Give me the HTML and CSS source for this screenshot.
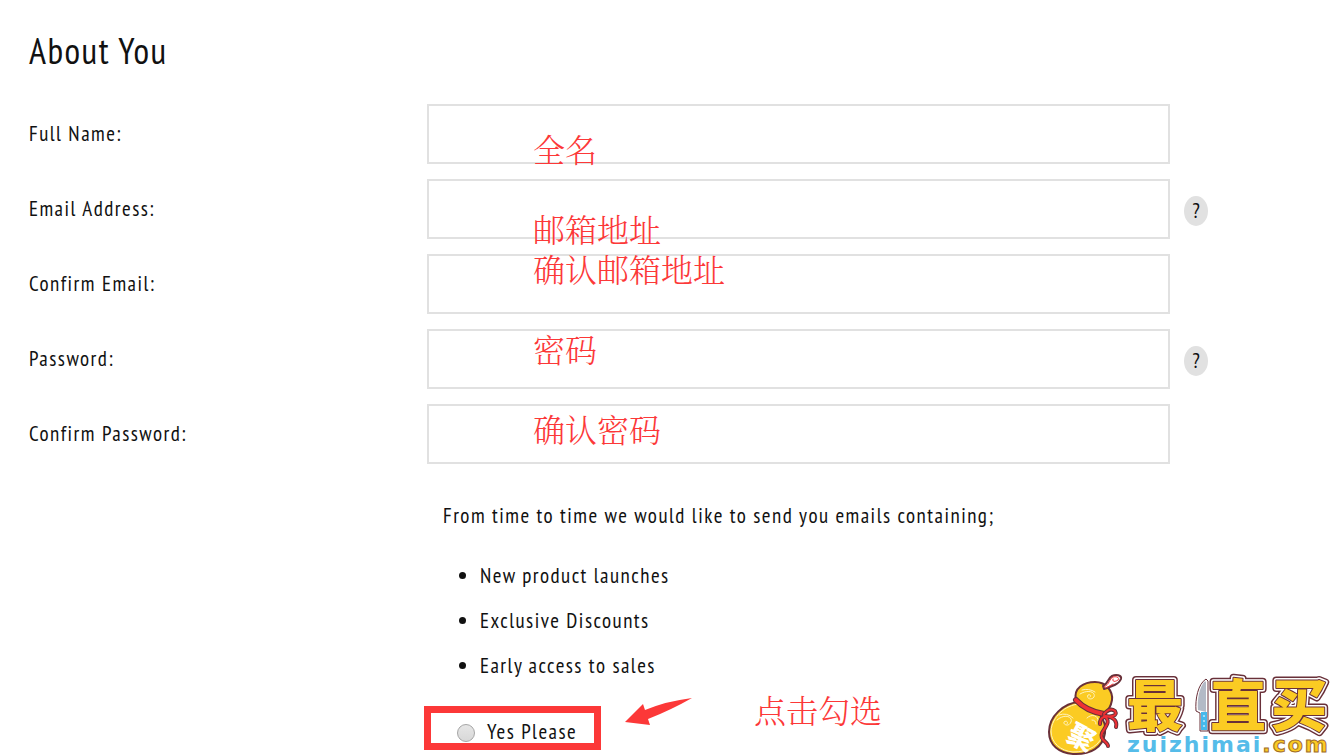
FILE: index.html
```html
<!DOCTYPE html>
<html lang="en">
<head>
<meta charset="utf-8">
<title>About You</title>
<link rel="stylesheet" href="styles.css">
</head>
<body>
<main class="page">
  <h1 class="title">About You</h1>
  <form class="form">
    <div class="row">
      <label class="label" for="name">Full Name:</label>
      <div class="field"><input class="input" id="name" type="text"><span class="note note-low">全名</span></div>
    </div>
    <div class="row">
      <label class="label" for="email">Email Address:</label>
      <div class="field"><input class="input" id="email" type="email"><span class="note note-lowest">邮箱地址</span></div>
      <button class="help" type="button" aria-label="Email help">?</button>
    </div>
    <div class="row">
      <label class="label" for="email2">Confirm Email:</label>
      <div class="field"><input class="input" id="email2" type="email"><span class="note note-highest">确认邮箱地址</span></div>
    </div>
    <div class="row">
      <label class="label" for="pass">Password:</label>
      <div class="field"><input class="input" id="pass" type="password"><span class="note note-high">密码</span></div>
      <button class="help" type="button" aria-label="Password help">?</button>
    </div>
    <div class="row">
      <label class="label" for="pass2">Confirm Password:</label>
      <div class="field"><input class="input" id="pass2" type="password"><span class="note note-middle">确认密码</span></div>
    </div>
    <div class="row">
      <div class="consent">
        <p class="intro">From time to time we would like to send you emails containing;</p>
        <ul class="list">
          <li>New product launches</li>
          <li>Exclusive Discounts</li>
          <li>Early access to sales</li>
        </ul>
        <div class="choice">
          <label class="option"><input class="radio" type="radio" name="optin">Yes Please</label>
          <svg class="arrow" width="68" height="30" viewBox="0 0 68 30" aria-hidden="true"><path d="M0 24 18 6 20 12Q42 3 67 0Q46 12 23 21L25 27Z" fill="#fc3838"/></svg>
          <span class="hint">点击勾选</span>
        </div>
      </div>
    </div>
  </form>
  <svg class="logo" width="290" height="86" viewBox="1045 670 290 86" role="img" aria-label="最值买 zuizhimai.com">
    <g stroke-linecap="round" stroke-linejoin="round">
      <path d="M1079 702C1064 703 1049 716 1049 732C1049 745 1059 753 1073 754C1091 755 1103 747 1105 733C1106 726 1104 720 1100 715Z" fill="#fbcb23" stroke="#693039" stroke-width="2"/>
      <path d="M1076 700C1073 688 1084 682 1095 682C1107 682 1113 692 1112 700C1111 706 1108 711 1104 714C1092 711 1082 707 1076 700Z" fill="#fbcb23" stroke="#693039" stroke-width="2"/>
      <path d="M1079 704C1065 705 1052 717 1051 731C1051 743 1061 751 1073 752C1089 752 1101 745 1103 733" fill="none" stroke="#fff3bf" stroke-width="1"/>
      <path d="M1103 686C1108 684 1108 678 1112 676C1116 674 1122 675 1121 679C1119 684 1113 686 1104 689Z" fill="#fff" stroke="#693039" stroke-width="2"/>
      <path d="M1104 687C1110 684 1109 679 1113 677C1117 676 1120 678 1118 680C1115 682 1112 682 1113 679M1106 688L1113 684" fill="none" stroke="#ef3034" stroke-width="1"/>
      <path d="M1080 694C1088 689 1096 692 1094 697C1091 701 1086 698 1088 695C1090 694 1092 696 1090 697M1082 690Q1089 688 1095 692M1057 720C1065 713 1073 717 1071 722C1069 727 1063 725 1064 722C1066 720 1069 722 1067 724M1059 715Q1067 712 1073 718M1087 718C1092 713 1099 716 1098 721M1092 720Q1096 720 1096 724" fill="none" stroke="#fff3bf" stroke-width="1"/>
      <path d="M1076 700Q1086 711 1104 714" fill="none" stroke="#693039" stroke-width="6"/>
      <path d="M1076 700Q1086 711 1104 714" fill="none" stroke="#ef3034" stroke-width="4"/>
      <path d="M1104 714Q1110 707 1115 711C1118 716 1111 717 1105 716C1116 717 1117 723 1116 727M1104 716C1112 721 1105 727 1102 733C1099 740 1108 742 1108 746M1104 717Q1100 718 1100 724" fill="none" stroke="#693039" stroke-width="4"/>
      <path d="M1104 714Q1110 707 1115 711C1118 716 1111 717 1105 716C1116 717 1117 723 1116 727M1104 716C1112 721 1105 727 1102 733C1099 740 1108 742 1108 746M1104 717Q1100 718 1100 724" fill="none" stroke="#ef3034" stroke-width="2"/>
    </g>
    <text class="seal" x="1068" y="747" transform="rotate(28 1081 737)">聚</text>
    <g class="brand-rim"><text x="1127" y="726">最</text><text x="1210" y="726">直</text><text x="1271" y="726">买</text></g>
    <g class="brand-gap"><text x="1127" y="726">最</text><text x="1210" y="726">直</text><text x="1271" y="726">买</text></g>
    <g class="brand-face"><text x="1127" y="726">最</text><text x="1210" y="726">直</text><text x="1271" y="726">买</text></g>
    <path d="M1206 679C1198 684 1195 699 1196 711L1200 713V731H1208V681Z" fill="#fff" stroke="#693039"/>
    <path d="M1205 681C1199 687 1197 700 1198 710L1206 712V682Z" fill="#b3bac6"/>
    <path d="M1201 712H1207V730H1201Z" fill="#45b9ec"/>
    <path d="M1204 715V717M1204 720V722M1204 725V727" stroke="#fff"/>
    <text class="domain" x="1127" y="752">zuizhimai<tspan class="domain-end">.com</tspan></text>
  </svg>
</main>
</body>
</html>
```
FILE: styles.css
```css
* { box-sizing: border-box; }
body { margin: 0; background: #fff; }
.page {
  position: relative;
  min-height: 100vh;
  padding: 26px 0 6px 29px;
  color: #111;
  font: 21px/30px "PT Sans Narrow", "Liberation Sans Narrow", Lato, sans-serif;
  letter-spacing: 0.07em;
}
.title { margin: 0 0 28px; font-size: 36px; line-height: 50px; font-weight: 400; }
.form { display: flex; flex-direction: column; gap: 15px; }
.row { display: grid; grid-template-columns: 398fr 743fr 165fr; }
.label { padding-top: 15px; }
.field { position: relative; }
.input { display: block; width: 100%; height: 60px; padding: 0 16px; border: 2px solid #e1e1e1; background: #fff; font: inherit; }
.note, .hint { color: #fc3838; font-family: "Noto Serif CJK SC", "Noto Sans CJK SC", sans-serif; font-size: 32px; line-height: 40px; font-weight: 300; letter-spacing: 0; white-space: nowrap; }
.note { position: absolute; left: 106px; pointer-events: none; }
.note-low { top: 24px; }
.note-lowest { top: 29px; }
.note-highest { top: -6px; }
.note-high { top: -1px; }
.note-middle { top: 4px; }
.help { justify-self: start; width: 24px; height: 30px; margin: 17px 0 0 14px; padding: 0; border: 0; border-radius: 50%; background: #e1e1e1; color: #111; font: inherit; letter-spacing: 0; }
.consent { grid-column: 2 / -1; padding-top: 22px; }
.intro { margin: 0 0 22px; padding-left: 16px; }
.list { margin: 0; padding-left: 53px; line-height: 45px; }
.choice { display: flex; align-items: flex-start; margin-top: 18px; }
.option { display: flex; align-items: center; gap: 12px; width: 177px; height: 44px; margin-left: -3px; padding: 8px 6px 0 26px; border: 7px solid #fc3838; white-space: nowrap; }
.radio { appearance: none; width: 18px; height: 18px; margin: 2px 0 0; border: 1px solid #a5a5a5; border-radius: 50%; background: linear-gradient(#e6e6e6, #d8d8d8); }
.arrow { margin: -8px 0 0 24px; }
.hint { margin: -17px 0 0 61px; }
.logo { position: absolute; right: 0; bottom: 0; letter-spacing: 0; }
.seal { font: 900 27px "Noto Sans CJK SC", sans-serif; fill: #fff; }
.brand-rim, .brand-gap, .brand-face { font: 900 56px "Noto Sans CJK SC", sans-serif; stroke-linejoin: round; }
.brand-rim { fill: #693039; stroke: #693039; stroke-width: 8px; }
.brand-gap { fill: #fff; stroke: #fff; stroke-width: 5px; }
.brand-face { fill: #fbcb23; stroke: #693039; stroke-width: 2px; paint-order: stroke; }
.domain { font: 700 22px "DejaVu Sans", sans-serif; letter-spacing: 2px; fill: #55bce9; }
.domain-end { fill: #fbcb23; stroke: #a06b2a; stroke-width: 1px; }
```
